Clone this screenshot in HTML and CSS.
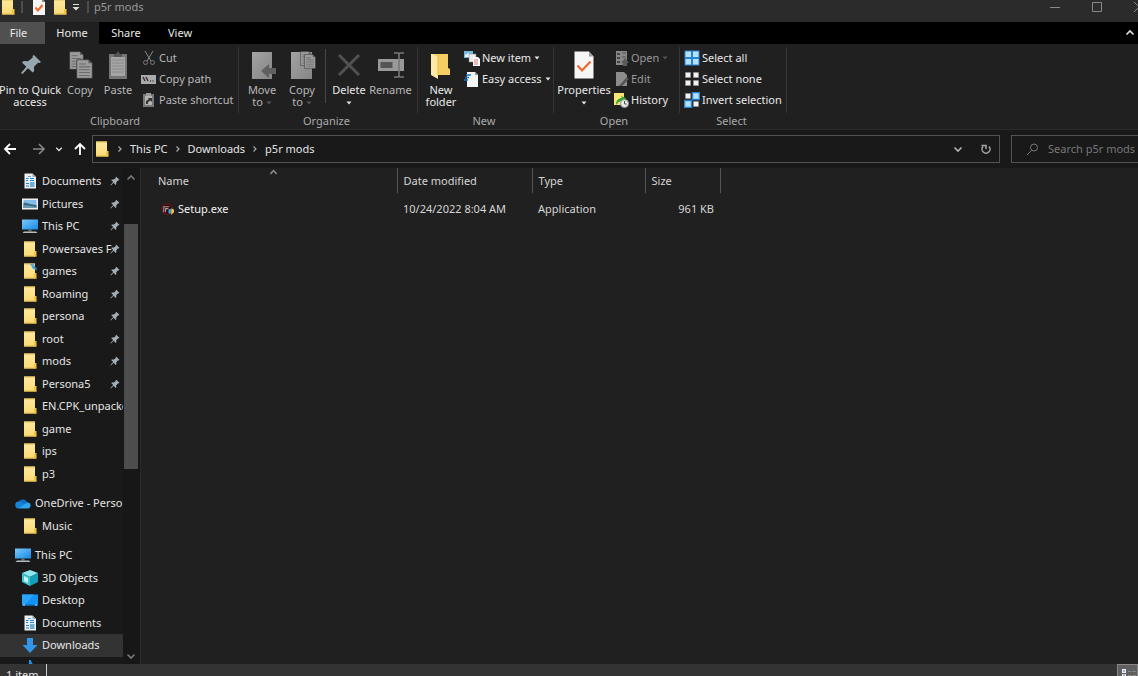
FILE: index.html
```html
<!DOCTYPE html>
<html lang="en">
<head>
<meta charset="utf-8">
<title>p5r mods</title>
<link rel="stylesheet" href="styles.css">
</head>
<body>
<svg class="defs" aria-hidden="true">
  <defs>
    <linearGradient id="gFolder" x1="0" y1="0" x2="0" y2="1"><stop offset="0" stop-color="#ffe9a0"/><stop offset="1" stop-color="#fcdb75"/></linearGradient>
    <linearGradient id="gScreen" x1="0" y1="0" x2="1" y2="1"><stop offset="0" stop-color="#7cc8fb"/><stop offset="1" stop-color="#1389e6"/></linearGradient>
    <linearGradient id="gPaper" x1="0" y1="0" x2="1" y2="1"><stop offset="0" stop-color="#a3a3a3"/><stop offset="1" stop-color="#858585"/></linearGradient>
    <symbol id="folder" viewBox="0 0 16 16"><path d="M2 .5h11v15H2z" fill="url(#gFolder)"/><path d="M13 10h1.500v5.500H12V11z" fill="#f2c33d"/><path d="M2 15h12.500M2 1h11" stroke="#e5bd4d" fill="none"/></symbol>
    <symbol id="pin" viewBox="0 0 16 16"><path d="M10 1l5 5-1 1-1-.2-3 3.200.1 3.200-1 1-3.400-3.400L1.500 15l-.8-.8 4.400-4.500L1.900 6.500l1.200-1.100 3.200.1L9.300 3 9 2z" fill="#a3afb8"/></symbol>
    <symbol id="pc" viewBox="0 0 16 16"><path d="M0 1.500h16v10H0z" fill="url(#gScreen)"/><path d="M6.500 11.500h3v2h-3z" fill="#64717b"/><path d="M2 13.500h12l1.500 1.500H.5z" fill="#b4bdc4"/></symbol>
    <symbol id="document" viewBox="0 0 16 16"><path d="M2.500.5h8l3.500 3.500v11.500H2.500z" fill="#eceff1"/><path d="M10.500.5V4H14z" fill="#9fa8ad"/><path d="M4 5.500h2.500M8 5.500h4M4 7.500h2M8 7.500h4M4 10.500h3M4 13h3" stroke="#1686d9"/><path d="M8 9h4.500v5H8z" fill="#6faed2"/><path d="M6 3.500h3" stroke="#63a9d7"/></symbol>
    <symbol id="picture" viewBox="0 0 16 16"><path d="M0 2.500h16v11H0z" fill="#eef1f3"/><path d="M1.500 4h13v8h-13z" fill="#84bde9"/><path d="M1.500 7c3-1 6 2 13 2v3h-13z" fill="#35697f"/><path d="M1.500 9.500c4-1 8 1 13 1.500v1h-13z" fill="#6f98b2"/></symbol>
    <symbol id="sheet" viewBox="0 0 22 28" preserveAspectRatio="none"><path d="M1 1h15l5 5v21H1z" fill="#9c9c9c" stroke="#3a3a3a"/><path d="M16 1v5h5" fill="#5e5e5e"/><path d="M4 7h9M4 11h14M4 15h14M4 19h14M4 23h14" stroke="#6a6a6a" stroke-width="1.500"/></symbol>
    <symbol id="checkdoc" viewBox="0 0 20 28"><path d="M.5.5h14.500l4.500 5v22H.5z" fill="#f6f6f6"/><path d="M15 .5l4.500 5H15z" fill="#9b9b9b"/><path d="M3.500 14.500l4.500 5 8.500-9" fill="none" stroke="#f2672a" stroke-width="2.200"/></symbol>
    <symbol id="right" viewBox="0 0 8 8"><path d="M2.500 1.500L5 4 2.500 6.500" fill="none" stroke="currentColor" stroke-width="1.200"/></symbol>
    <symbol id="down" viewBox="0 0 10 10"><path d="M1.500 3.500L5 7l3.500-3.500" fill="none" stroke="currentColor" stroke-width="1.700"/></symbol>
    <symbol id="up" viewBox="0 0 10 10"><path d="M1.500 6.500L5 3l3.500 3.500" fill="none" stroke="currentColor" stroke-width="1.700"/></symbol>
    <symbol id="tri" viewBox="0 0 6 4"><path d="M.5.500h5L3 3.500z" fill="currentColor"/></symbol>
  </defs>
</svg>
<div class="window">
  <header class="titlebar">
    <svg class="i16"><use href="#folder"/></svg>
    <span class="tick"></span>
    <button class="quick" aria-label="Properties"><svg class="mini" viewBox="0 0 12 16"><path d="M0 0h9l3 3v13H0z" fill="#f6f6f6"/><path d="M9 0l3 3H9z" fill="#888"/><path d="M2.500 8.500l2.500 3 4.500-5.500" fill="none" stroke="#f2672a" stroke-width="2"/></svg></button>
    <button class="quick" aria-label="New folder"><svg class="i16"><use href="#folder"/></svg></button>
    <button class="quick customize" aria-label="Customize toolbar"><svg width="8" height="10" viewBox="0 0 8 10"><path d="M1 2.500h6" stroke="#ddd"/><path d="M.5 5h7L4 8.500z" fill="#ddd"/></svg></button>
    <span class="tick"></span>
    <h1 class="title">p5r mods</h1>
    <div class="controls">
      <button aria-label="Minimize"><svg width="12" height="12"><path d="M1 6.500h10" stroke="#888"/></svg></button>
      <button aria-label="Maximize"><svg width="12" height="12"><path d="M1.500 1.500h9v9h-9z" fill="none" stroke="#888"/></svg></button>
      <button aria-label="Close"><svg width="12" height="12"><path d="M1 1l10 10M11 1L1 11" stroke="#888"/></svg></button>
    </div>
  </header>
  <nav class="tabs">
    <button class="tab file">File</button>
    <button class="tab active">Home</button>
    <button class="tab">Share</button>
    <button class="tab">View</button>
    <button class="collapse" aria-label="Collapse ribbon"><svg class="i10"><use href="#up"/></svg></button>
  </nav>
  <div class="ribbon">
    <section class="group clipboard">
      <div class="tools">
        <button class="big wide on"><svg class="art" viewBox="0 0 28 28"><path d="M18 4l7 7-1.500 1-1.500-.3-4 4 .2 4.300-1.500 1.500-4.700-4.300L6.500 23 5 22l5.300-6.200L6 11.500 7.800 10l4.200.2 4.800-3.700L16.500 5z" fill="#98a6b0"/></svg><span>Pin to Quick<br>access</span></button>
        <button class="big narrow"><svg class="art" viewBox="0 0 28 28"><use href="#sheet" x="3" y="0" width="15" height="19"/><use href="#sheet" x="10" y="8" width="17" height="20"/></svg><span>Copy</span></button>
        <button class="big"><svg class="art" viewBox="0 0 28 28"><path d="M5 3h18v25H5z" fill="#757575"/><path d="M7 6h14v19H7z" fill="#a5a5a5"/><path d="M10 3h2l2-3 2 3h2v3h-8z" fill="#555"/><path d="M8 9h12M8 12h12M8 15h12M8 18h12M8 21h12" stroke="#8a8a8a"/></svg><span>Paste</span></button>
        <div class="stack">
          <button class="small"><svg class="i16" viewBox="0 0 16 16"><path d="M4 1l6 10M12 1L6 11" stroke="#85898c" fill="none"/><circle cx="4.500" cy="12.500" r="2" fill="none" stroke="#777"/><circle cx="11.500" cy="12.500" r="2" fill="none" stroke="#777"/></svg>Cut</button>
          <button class="small"><svg class="i16" viewBox="0 0 16 16"><path d="M0 4h15v9H0z" fill="#aaa"/><path d="M2 6l2 4M5 6l2 4M9 10h1M11.500 10h1" stroke="#333" stroke-width="1.400"/></svg>Copy path</button>
          <button class="small"><svg class="i16" viewBox="0 0 16 16"><path d="M2 2h11v13H2z" fill="#777"/><path d="M4 4h7v9H4z" fill="#b5b5b5"/><path d="M5 1h5v3H5z" fill="#999"/><path d="M5 12V9l3-2-1.500-1H11v4L9.500 8.500 7 10v2z" fill="#333"/></svg>Paste shortcut</button>
        </div>
      </div>
      <h2 class="caption">Clipboard</h2>
    </section>
    <section class="group organize">
      <div class="tools">
        <button class="big"><svg class="art" viewBox="0 0 28 28"><path d="M4 1h20v27H4z" fill="url(#gPaper)"/><path d="M13 20l8-7v4h7v6h-7v4z" fill="#606060"/></svg><span>Move<br>to <svg class="tri off"><use href="#tri"/></svg></span></button>
        <button class="big"><svg class="art" viewBox="0 0 28 28"><path d="M3 1h21v27H3z" fill="url(#gPaper)"/><use href="#sheet" x="12" y="0" width="12" height="15"/><use href="#sheet" x="16" y="3" width="12" height="15"/></svg><span>Copy<br>to <svg class="tri off"><use href="#tri"/></svg></span></button>
        <div class="rule"></div>
        <button class="big on"><svg class="art" viewBox="0 0 28 28"><path d="M4 4l20 20M24 4L4 24" stroke="#515151" stroke-width="3"/></svg><span>Delete<br><svg class="tri"><use href="#tri"/></svg></span></button>
        <button class="big rename"><svg class="art" viewBox="0 0 28 28"><path d="M1 8h26v12H1z" fill="#999"/><path d="M3.500 11h12v6h-12z" fill="#555"/><path d="M17 2h4l1 1 1-1h4M17 26h4l1-1 1 1h4M22 3v22" fill="none" stroke="#777" stroke-width="1.600"/></svg><span>Rename</span></button>
      </div>
      <h2 class="caption">Organize</h2>
    </section>
    <section class="group new">
      <div class="tools">
        <button class="big on"><svg class="art" viewBox="0 0 28 28"><path d="M6 3h15v14l2 1v6H6z" fill="#f6cd62"/><path d="M4 3h2l5 3v22l-7-4z" fill="#ffe9a3"/><path d="M11 4v20" stroke="#e9bb48"/></svg><span>New folder</span></button>
        <div class="stack">
          <button class="small on"><svg class="i16" viewBox="0 0 16 16"><path d="M0 1h9v7H0z" fill="#73b9de"/><path d="M1 5l3-2 4 3v1H1z" fill="#e9f2f6"/><path d="M5 4h7v8H5z" fill="#eee" stroke="#888" stroke-width=".5"/><path d="M9 7h5l2 2v7H9z" fill="#fff"/><path d="M10 10h4M10 12h4M10 14h4" stroke="#de7770"/></svg>New item<svg class="tri"><use href="#tri"/></svg></button>
          <button class="small on"><svg class="i16" viewBox="0 0 16 16"><path d="M3 1h8l3 3v12H3z" fill="#f2f4f5"/><path d="M11 1v3h3z" fill="#999"/><path d="M2 4h5M1 6.500h4M0 9h4" stroke="#1578c8" stroke-width="1.300"/></svg>Easy access<svg class="tri"><use href="#tri"/></svg></button>
        </div>
      </div>
      <h2 class="caption">New</h2>
    </section>
    <section class="group open">
      <div class="tools">
        <button class="big wide on"><svg class="art"><use href="#checkdoc"/></svg><span>Properties<br><svg class="tri"><use href="#tri"/></svg></span></button>
        <div class="stack">
          <button class="small off"><svg class="i16" viewBox="0 0 16 16"><path d="M3 1h11v14H3z" fill="#888"/><path d="M4 3h3v2H4zM4 7h3v2H4zM4 11h3v2H4z" fill="#444"/><path d="M9 3h4M9 7h4" stroke="#555"/><path d="M8 13l4-5 4 5h-2v3h-4v-3z" fill="#5b5b5b"/></svg>Open<svg class="tri off"><use href="#tri"/></svg></button>
          <button class="small off"><svg class="i16" viewBox="0 0 16 16"><path d="M3 1h8l3 3v11H3z" fill="#8c8c8c"/><path d="M6 15l8-9 2 2-7 7z" fill="#525252"/></svg>Edit</button>
          <button class="small on"><svg class="i16" viewBox="0 0 16 16"><path d="M1 1h10v12H1z" fill="#fbe279"/><path d="M3 13c0-5 3-7 6-7l-1-2 5 2-3 5-1-2c-3 0-4 2-6 4z" fill="#31a62d"/><circle cx="11.500" cy="11.500" r="4" fill="#e5e9eb" stroke="#8a9298"/><path d="M11.500 9v3h2" fill="none" stroke="#555"/></svg>History</button>
        </div>
      </div>
      <h2 class="caption">Open</h2>
    </section>
    <section class="group select">
      <div class="tools">
        <div class="stack">
          <button class="small on"><svg class="i16" viewBox="0 0 16 16"><path d="M.5.500h15v15H.500z" fill="#2684d5"/><path d="M1.500 1.500H7V7H1.500zM9 1.500h5.500V7H9zM1.500 9H7v5.500H1.500zM9 9h5.500v5.500H9z" fill="#b9e0fb"/></svg>Select all</button>
          <button class="small on"><svg class="i16" viewBox="0 0 16 16"><path d="M1.500 1.500h5v5h-5zM9.500 1.500h5v5h-5zM1.500 9.500h5v5h-5zM9.500 9.500h5v5h-5z" fill="#f2f2f2" stroke="#999" stroke-width=".6"/></svg>Select none</button>
          <button class="small on"><svg class="i16" viewBox="0 0 16 16"><path d="M8.500.500h7v7h-7zM.5 8.500h7v7h-7z" fill="#b9e0fb" stroke="#2684d5" stroke-width="1.500"/><path d="M1.500 1.500h5v5h-5zM9.500 9.500h5v5h-5z" fill="#f2f2f2" stroke="#999" stroke-width=".6"/></svg>Invert selection</button>
        </div>
      </div>
      <h2 class="caption">Select</h2>
    </section>
  </div>
  <div class="location">
    <div class="history">
      <button aria-label="Back"><svg width="14" height="14"><path d="M13 7H2M7 2L2 7l5 5" fill="none" stroke="#fff" stroke-width="1.800"/></svg></button>
      <button class="forward" aria-label="Forward"><svg width="14" height="14"><path d="M1 7h11M7 2l5 5-5 5" fill="none" stroke="#888" stroke-width="1.600"/></svg></button>
      <button class="recent" aria-label="Recent locations"><svg><use href="#down"/></svg></button>
      <button aria-label="Up"><svg width="14" height="14"><path d="M7 13V2M2 7l5-5 5 5" fill="none" stroke="#fff" stroke-width="1.800"/></svg></button>
    </div>
    <div class="address">
      <svg class="i16"><use href="#folder"/></svg>
      <svg class="sep"><use href="#right"/></svg>
      <a href="#">This PC</a>
      <svg class="sep"><use href="#right"/></svg>
      <a href="#">Downloads</a>
      <svg class="sep"><use href="#right"/></svg>
      <a href="#">p5r mods</a>
      <span class="fill"></span>
      <button aria-label="Previous locations"><svg class="i10"><use href="#down"/></svg></button>
      <button aria-label="Refresh"><svg width="12" height="12"><path d="M9 3.500A4 4 0 1 1 3 3.500M1.500 2.500H6V6" fill="none" stroke="#a5a5a5" stroke-width="1.500"/></svg></button>
    </div>
    <label class="search"><svg width="13" height="13"><circle cx="8" cy="4.500" r="3.500" fill="none" stroke="#777"/><path d="M5.500 7.500L1 12" stroke="#777"/></svg><input type="text" placeholder="Search p5r mods" aria-label="Search p5r mods"></label>
  </div>
  <div class="content">
    <aside class="sidebar">
      <div class="tree">
        <ul class="branch quickaccess">
          <li><svg class="i16"><use href="#document"/></svg><span>Documents</span><svg class="pin"><use href="#pin"/></svg></li>
          <li><svg class="i16"><use href="#picture"/></svg><span>Pictures</span><svg class="pin"><use href="#pin"/></svg></li>
          <li><svg class="i16"><use href="#pc"/></svg><span>This PC</span><svg class="pin"><use href="#pin"/></svg></li>
          <li><svg class="i16"><use href="#folder"/></svg><span>Powersaves F</span><svg class="pin"><use href="#pin"/></svg></li>
          <li><svg class="i16" viewBox="0 0 16 16"><use href="#folder"/><path d="M8 1l3-1 3 5 1 2-4-1z" fill="#5da7d8"/><path d="M12 4l3 1v3z" fill="#1c68b0"/></svg><span>games</span><svg class="pin"><use href="#pin"/></svg></li>
          <li><svg class="i16"><use href="#folder"/></svg><span>Roaming</span><svg class="pin"><use href="#pin"/></svg></li>
          <li><svg class="i16"><use href="#folder"/></svg><span>persona</span><svg class="pin"><use href="#pin"/></svg></li>
          <li><svg class="i16"><use href="#folder"/></svg><span>root</span><svg class="pin"><use href="#pin"/></svg></li>
          <li><svg class="i16"><use href="#folder"/></svg><span>mods</span><svg class="pin"><use href="#pin"/></svg></li>
          <li><svg class="i16"><use href="#folder"/></svg><span>Persona5</span><svg class="pin"><use href="#pin"/></svg></li>
          <li><svg class="i16"><use href="#folder"/></svg><span>EN.CPK_unpacked</span></li>
          <li><svg class="i16"><use href="#folder"/></svg><span>game</span></li>
          <li><svg class="i16"><use href="#folder"/></svg><span>ips</span></li>
          <li><svg class="i16"><use href="#folder"/></svg><span>p3</span></li>
        </ul>
        <ul class="branch cloud">
          <li class="root"><svg class="i16" viewBox="0 0 16 16"><path d="M4 6a5 4.500 0 0 1 8.500 1.500L9 12H4z" fill="#0f6fc4"/><path d="M3.500 13.500A3.500 3.500 0 0 1 4 6.500c2 0 4 2 7 4z" fill="#1483d8"/><path d="M3.500 13.500L9 9.500l3.500-2a3 3 0 0 1 0 6z" fill="#2fa6ed"/></svg><span>OneDrive - Person</span></li>
          <li><svg class="i16"><use href="#folder"/></svg><span>Music</span></li>
        </ul>
        <ul class="branch computer">
          <li class="root"><svg class="i16"><use href="#pc"/></svg><span>This PC</span></li>
          <li><svg class="i16" viewBox="0 0 16 16"><path d="M0 3l8-3 8 3-8 4z" fill="#8de8ef"/><path d="M0 3l8 4v9l-8-4z" fill="#3fc4d3"/><path d="M16 3L8 7v9l8-4z" fill="#14a0b7"/><path d="M2 6l4 2v5l-4-2z" fill="#c2f5f7"/></svg><span>3D Objects</span></li>
          <li><svg class="i16" viewBox="0 0 16 16"><path d="M0 2.500h16v11H0z" fill="#1093f5"/><path d="M0 2.500h12L3 13H0z" fill="#2aa3fa"/><path d="M0 13h16" stroke="#0868b7"/><path d="M1 13h2M13 13h2" stroke="#bce1fb"/></svg><span>Desktop</span></li>
          <li><svg class="i16"><use href="#document"/></svg><span>Documents</span></li>
          <li class="current"><svg class="i16" viewBox="0 0 16 16"><path d="M5 1h6v7h4.500L8 16 .5 8H5z" fill="#3395ea"/></svg><span>Downloads</span></li>
          <li><svg class="i16" viewBox="0 0 16 16"><path d="M7 0h2c0 4 4 4 3 9-1-2-2-3-3-3v6a3 2.500 0 1 1-2-2z" fill="#1795f2"/></svg></li>
        </ul>
      </div>
      <div class="scrollbar"><svg class="i10"><use href="#up"/></svg><div class="track"><div class="thumb"></div></div><svg class="i10"><use href="#down"/></svg></div>
    </aside>
    <main class="files">
      <table>
        <colgroup><col class="c-name"><col class="c-date"><col class="c-type"><col class="c-size"></colgroup>
        <thead><tr><th>Name<svg class="sort"><use href="#up"/></svg></th><th>Date modified</th><th>Type</th><th>Size</th></tr></thead>
        <tbody><tr><td><span class="entry"><svg width="13" height="13" viewBox="0 0 14 14"><circle cx="6.500" cy="6.500" r="5.500" fill="#280608" stroke="#8c1418"/><path d="M3 10V4h6M5 10V6h3" fill="none" stroke="#a9a0a2" stroke-width="1.200"/><path d="M8 7l3-1v4L9.500 12 8 10z" fill="#3d9ae8"/><path d="M11 6l3 1v3l-3 3z" fill="#f2bf3c"/></svg>Setup.exe</span></td><td>10/24/2022 8:04 AM</td><td>Application</td><td class="num">961 KB</td></tr></tbody>
      </table>
    </main>
  </div>
  <footer class="status"><span class="count">1 item</span>
    <button class="view" aria-label="Details view"><svg width="20" height="12"><path d="M4 4h4v4H4zM4 9h4v3H4z" fill="#eee"/><path d="M5 6h2M5 10h2" stroke="#4678c7"/><path d="M10 6.500h3M14 6.500h4M10 10.500h3M14 10.500h4" stroke="#888"/></svg></button>
  </footer>
</div>
</body>
</html>
```
FILE: styles.css
```css
* { box-sizing: border-box; }
body { margin: 0; background: #202020; color: #e4e4e4; font: 11px/14px "Noto Sans", "Open Sans", sans-serif; }
button { border: 0; padding: 0; background: none; color: inherit; font: inherit; display: flex; align-items: center; justify-content: center; }
svg { display: block; flex: none; }
h1, h2 { margin: 0; font: inherit; }
a { color: inherit; text-decoration: none; }
ul { margin: 0; padding: 0; list-style: none; }
.defs { position: absolute; width: 0; height: 0; }
.i16 { width: 16px; height: 16px; }
.i10 { width: 10px; height: 10px; color: #b0b0b0; }
.tri { display: inline-block; width: 6px; height: 4px; vertical-align: middle; color: #e4e4e4; }
.tri.off { color: #555; }
.window { display: flex; flex-direction: column; height: 100vh; overflow: hidden; }

.titlebar { display: flex; align-items: center; height: 22px; padding-bottom: 8px; background: #2b2b2b; color: #999; flex: none; overflow: hidden; }
.titlebar > .tick { width: 2px; height: 12px; margin: 0 5px; background: #4d4d4d; }
.quick { width: 21px; height: 16px; }
.mini { width: 12px; height: 16px; }
.customize { width: 12px; }
.title { flex: 1; }
.controls { display: flex; gap: 30px; margin-right: -7px; }

.tabs { display: flex; height: 22px; background: #000; flex: none; }
.tab { width: 54px; color: #e8e8e8; }
.tab.file { width: 45px; padding-right: 8px; background: #505050; }
.tab.active { background: #202020; }
.collapse { margin-left: auto; width: 16px; }
.collapse svg { color: #ddd; }

.ribbon { display: flex; padding-top: 3px; background: #202020; border-bottom: 1px solid #2b2b2b; flex: none; }
.group { display: flex; flex-direction: column; border-right: 1px solid #353535; height: 66px; margin-bottom: 16px; }
.tools { display: flex; flex: none; height: 64px; }
.caption { text-align: center; color: #aaa; padding-top: 3px; }
.clipboard { width: 239px; }
.clipboard .caption { padding-right: 8px; }
.organize { width: 179px; padding-left: 3px; }
.organize .caption, .new .caption, .open .caption, .select .caption { padding-right: 6px; }
.new { width: 136px; padding-left: 3px; }
.open { width: 126px; padding-left: 1px; }
.select { width: 107px; padding-left: 3px; }
.big { flex-direction: column; justify-content: flex-start; width: 40px; padding-top: 4px; line-height: 12px; color: #b8b8b8; }
.big > span { margin-top: 5px; }
.big.wide { width: 58px; white-space: nowrap; }
.clipboard .wide { width: 62px; padding-right: 2px; }
.clipboard .narrow { width: 36px; }
.rename { width: 43px; }
.big.on, .small.on { color: #e8e8e8; }
.art { width: 28px; height: 28px; }
.rule { width: 1px; margin: 2px 3px 8px; background: #454545; }
.stack { display: flex; flex-direction: column; margin-left: 3px; }
.open .stack { margin-left: 0; }
.select .stack { margin-left: 1px; }
.small { height: 21px; justify-content: flex-start; gap: 2px; color: #b8b8b8; white-space: nowrap; }
.small.off { color: #999; }
.small .tri { margin-left: 1px; }

.location { display: flex; align-items: center; height: 38px; background: #191919; flex: none; }
.history { display: flex; width: 92px; padding-left: 3px; justify-content: space-between; padding-right: 5px; }
.forward { margin-left: 5px; }
.recent { color: #ddd; }
.recent svg { width: 8px; height: 8px; }
.address { display: flex; align-items: center; flex: 1; height: 28px; padding: 0 6px 0 1px; gap: 6px; border: 1px solid #535353; }
.sep { width: 8px; height: 8px; color: #aaa; }
.fill { flex: 1; }
.address button { width: 14px; margin-left: 8px; }
.search { display: flex; align-items: center; width: 127px; height: 28px; margin-left: 11px; padding-left: 14px; gap: 9px; border: 1px solid #535353; border-right: 0; }
.search input { flex: 1; min-width: 0; border: 0; padding: 0; background: none; color: #ddd; font: inherit; }
.search input::placeholder { color: #777; opacity: 1; }

.content { display: flex; flex: 1; min-height: 0; }
.sidebar { display: flex; width: 141px; background: #191919; border-right: 1px solid #2b2b2b; flex: none; }
.tree { flex: 1; min-width: 0; overflow: hidden; padding-top: 2px; }
.branch { display: grid; grid-auto-rows: 1fr; margin-bottom: 7px; }
.quickaccess { height: 315px; }
.cloud { height: 45px; }
.computer { height: 135px; }
.branch li { display: flex; align-items: center; padding-left: 22px; white-space: nowrap; overflow: hidden; }
.branch li.root { padding-left: 15px; }
.branch span { flex: 1; min-width: 0; margin-left: 4px; }
.branch .current { background: #333; }
.pin { width: 10px; height: 10px; margin-right: 3px; }
.scrollbar { display: flex; flex-direction: column; align-items: center; width: 17px; padding: 5px 2px 3px 0; background: #171717; }
.scrollbar .i10 { color: #777; }
.track { flex: 1; width: 14px; padding-top: 41px; }
.thumb { width: 14px; height: 245px; background: #4d4d4d; }

.files { flex: 1; min-width: 0; background: #202020; }
table { border-collapse: collapse; table-layout: fixed; width: 579px; }
.c-name { width: 256px; }
.c-date { width: 135px; }
.c-type { width: 113px; }
.c-size { width: 75px; }
th, td { padding: 0 6px; text-align: left; font-weight: normal; white-space: nowrap; }
th { position: relative; height: 25px; border-right: 1px solid #555; color: #d5d5d5; }
td { height: 32px; color: #d5d5d5; }
th:first-child { padding-left: 17px; }
td:first-child { padding-left: 20px; color: #f2f2f2; }
td.num { text-align: right; }
.entry { display: flex; align-items: center; gap: 4px; }
.sort { position: absolute; left: 50%; top: 0; width: 9px; height: 9px; color: #888; }

.status { display: flex; height: 12px; background: #333; flex: none; overflow: hidden; }
.count { height: 16px; padding: 4px 8px 0 6px; border-right: 1px solid #ccc; line-height: 14px; }
.view { width: 21px; margin-left: auto; background: #606060; border: 1px solid #888; border-bottom: 0; }
```
